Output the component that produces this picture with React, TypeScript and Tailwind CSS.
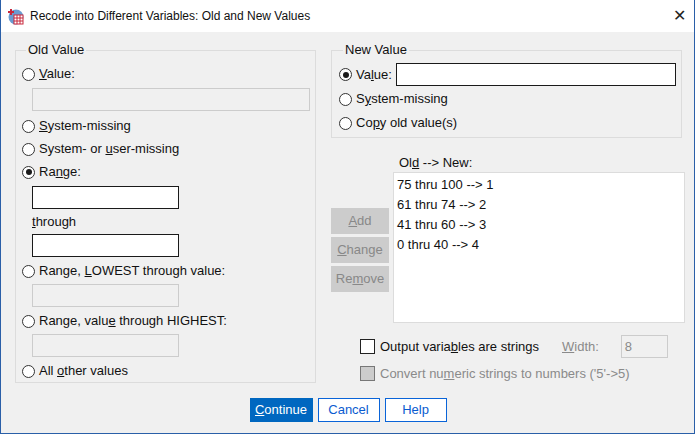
import React from 'react';

const Radio = ({ checked, label }: { checked?: boolean; label: React.ReactNode }) => (
  <div className="flex items-center h-[16px]">
    <span className="w-[13px] h-[13px] rounded-full border border-[#333] bg-white flex items-center justify-center shrink-0">
      {checked && <span className="w-[6px] h-[6px] rounded-full bg-[#1a1a1a]" />}
    </span>
    <span className="ml-[4px]">{label}</span>
  </div>
);

const Input = ({ w, disabled, value }: { w: string; disabled?: boolean; value?: string }) => (
  <div
    className={`${w} h-[23px] border flex items-center px-[3px] ${
      disabled ? 'bg-[#f0f0f0] border-[#cccccc] text-[#8a8a8a]' : 'bg-white border-[#1a1a1a]'
    }`}
  >
    {value}
  </div>
);

const SideBtn = ({ children }: { children: React.ReactNode }) => (
  <div className="w-[58px] h-[26px] bg-[#cccccc] text-[#888] flex items-center justify-center">{children}</div>
);

export default function App() {
  return (
    <div
      className="w-[695px] h-[434px] bg-[#f0f0f0] border-x border-b border-[#2a5fa8] text-[13px] text-[#111] flex flex-col"
      style={{ fontFamily: '"Liberation Sans", Arial, sans-serif' }}
    >
      <div className="h-[32px] bg-white flex items-center pl-[6px] pr-[8px] shrink-0">
        <svg width="17" height="17" viewBox="0 0 17 17">
          <circle cx="9" cy="9" r="7.5" fill="#6a9bd1" />
          <rect x="7" y="7" width="9" height="9" fill="#fff" stroke="#c8283c" strokeWidth="1" />
          <path d="M7 10h9M7 13h9M10 7v9M13 7v9" stroke="#c8283c" strokeWidth="1" />
          <path d="M1 4h6M4 1v6" stroke="#c8283c" strokeWidth="2" />
        </svg>
        <span className="ml-[6px] text-[12px]">Recode into Different Variables: Old and New Values</span>
        <span className="ml-auto text-[16px] leading-none text-[#222]">✕</span>
      </div>

      <div className="flex pl-[14px] pt-[11px]">
        <fieldset className="w-[301px] h-[340px] border border-[#dcdcdc] pl-[6px] pr-[4px] m-0">
          <legend className="px-[2px] leading-[14px] ml-[4px]">Old Value</legend>
          <div className="mt-[9px]"><Radio label={<><u>V</u>alue:</>} /></div>
          <div className="mt-[6px] ml-[10px]"><Input w="w-[278px]" disabled /></div>
          <div className="mt-[7px]"><Radio label={<><u>S</u>ystem-missing</>} /></div>
          <div className="mt-[7px]"><Radio label={<>System- or <u>u</u>ser-missing</>} /></div>
          <div className="mt-[7px]"><Radio checked label={<>Ra<u>n</u>ge:</>} /></div>
          <div className="mt-[6px] ml-[10px]"><Input w="w-[147px]" /></div>
          <div className="mt-[5px] ml-[10px] h-[16px] leading-[16px]"><u>t</u>hrough</div>
          <div className="mt-[4px] ml-[10px]"><Input w="w-[147px]" /></div>
          <div className="mt-[6px]"><Radio label={<>Range, <u>L</u>OWEST through value:</>} /></div>
          <div className="mt-[5px] ml-[10px]"><Input w="w-[147px]" disabled /></div>
          <div className="mt-[6px]"><Radio label={<>Range, valu<u>e</u> through HIGHEST:</>} /></div>
          <div className="mt-[5px] ml-[10px]"><Input w="w-[147px]" disabled /></div>
          <div className="mt-[6px]"><Radio label={<>All <u>o</u>ther values</>} /></div>
        </fieldset>

        <div className="ml-[15px] w-[354px] flex flex-col">
          <fieldset className="w-[351px] h-[95px] border border-[#dcdcdc] pl-[7px] m-0">
            <legend className="px-[2px] leading-[14px] ml-[4px]">New Value</legend>
            <div className="flex items-center mt-[6px]">
              <Radio checked label={<>Va<u>l</u>ue:</>} />
              <div className="ml-[4px]"><Input w="w-[280px]" /></div>
            </div>
            <div className="mt-[5px]"><Radio label={<>S<u>y</u>stem-missing</>} /></div>
            <div className="mt-[8px]"><Radio label={<>Co<u>p</u>y old value(s)</>} /></div>
          </fieldset>

          <div className="mt-[17px] ml-[68px] h-[16px] leading-[16px]">Ol<u>d</u> --&gt; New:</div>
          <div className="flex mt-[1px]">
            <div className="flex flex-col gap-[3px] mt-[36px] w-[58px]">
              <SideBtn><u>A</u>dd</SideBtn>
              <SideBtn><u>C</u>hange</SideBtn>
              <SideBtn>Re<u>m</u>ove</SideBtn>
            </div>
            <div className="ml-[4px] w-[292px] h-[151px] bg-white border border-[#dcdcdc] px-[3px] pt-[2px] leading-[20px]">
              <div>75 thru 100 --&gt; 1</div>
              <div>61 thru 74 --&gt; 2</div>
              <div>41 thru 60 --&gt; 3</div>
              <div>0 thru 40 --&gt; 4</div>
            </div>
          </div>

          <div className="flex items-center mt-[12px] ml-[29px]">
            <span className="w-[15px] h-[15px] border border-[#222] bg-white" />
            <span className="ml-[5px]">Output varia<u>b</u>les are strings</span>
            <span className="ml-[23px] text-[#8a8a8a]"><u>W</u>idth:</span>
            <div className="ml-[22px]"><Input w="w-[47px]" disabled value="8" /></div>
          </div>
          <div className="flex items-center mt-[6px] ml-[29px]">
            <span className="w-[15px] h-[15px] border border-[#777] bg-[#cccccc]" />
            <span className="ml-[5px] text-[#8a8a8a]">Convert nu<u>m</u>eric strings to numbers ('5'-&gt;5)</span>
          </div>
        </div>
      </div>

      <div className="flex justify-center gap-[5px] mt-[14px] ml-[1px]">
        <div className="w-[63px] h-[24px] bg-[#0067c0] border border-[#0067c0] text-white flex items-center justify-center"><u>C</u>ontinue</div>
        <div className="w-[62px] h-[24px] bg-white border border-[#0a64d8] text-[#0a5bd0] flex items-center justify-center">Cancel</div>
        <div className="w-[62px] h-[24px] bg-white border border-[#0a64d8] text-[#0a5bd0] flex items-center justify-center">Help</div>
      </div>
    </div>
  );
}
